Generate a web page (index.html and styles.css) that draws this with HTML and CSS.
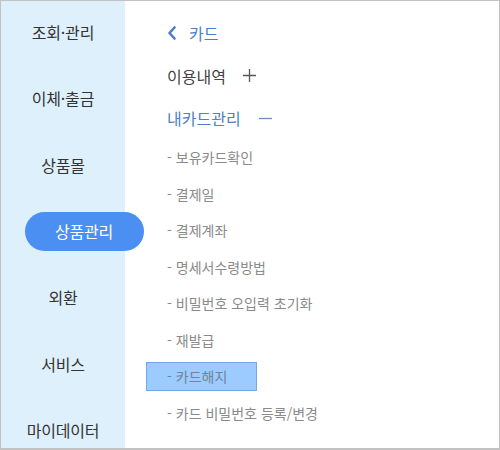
FILE: index.html
```html
<!DOCTYPE html>
<html lang="ko">
<head>
<meta charset="utf-8">
<link rel="stylesheet" href="styles.css">
</head>
<body>
<div class="frame">
  <nav class="side">
    <div class="side-item">조회·관리</div>
    <div class="side-item">이체·출금</div>
    <div class="side-item">상품몰</div>
    <div class="side-item"><span class="pill">상품관리</span></div>
    <div class="side-item">외환</div>
    <div class="side-item">서비스</div>
    <div class="side-item">마이데이터</div>
  </nav>
  <main class="main">
    <div class="title">
      <svg class="chev" width="10" height="14" viewBox="0 0 10 14"><polyline points="7.5,1.5 2.5,7 7.5,12.5" fill="none" stroke="#4a7fc6" stroke-width="2.6" stroke-linecap="round" stroke-linejoin="round"/></svg>
      <span>카드</span>
    </div>
    <div class="group">
      <span>이용내역</span>
      <svg class="plus" width="15" height="15" viewBox="0 0 15 15"><path d="M7.5 1v13M1 7.5h13" stroke="#555" stroke-width="1.3" fill="none"/></svg>
    </div>
    <div class="group open">
      <span>내카드관리</span>
      <svg class="minus" width="15" height="15" viewBox="0 0 15 15"><path d="M1 7.5h13" stroke="#6f8fbf" stroke-width="1.3" fill="none"/></svg>
    </div>
    <ul class="subs">
      <li><span class="sub">- 보유카드확인</span></li>
      <li><span class="sub">- 결제일</span></li>
      <li><span class="sub">- 결제계좌</span></li>
      <li><span class="sub">- 명세서수령방법</span></li>
      <li><span class="sub">- 비밀번호 오입력 초기화</span></li>
      <li><span class="sub">- 재발급</span></li>
      <li><span class="sub active">- 카드해지</span></li>
      <li><span class="sub">- 카드 비밀번호 등록/변경</span></li>
    </ul>
  </main>
</div>
</body>
</html>
```
FILE: styles.css
```css
* { box-sizing: border-box; }
html, body { margin: 0; padding: 0; background: #fff; }
body { font-family: "Noto Sans CJK KR", "Noto Sans", sans-serif; }
.frame {
  width: 500px;
  height: 450px;
  border: 1px solid #c2c2c2;
  border-bottom-width: 2px;
  display: flex;
  overflow: hidden;
}
.side {
  width: 124px;
  flex: none;
  background: #dff0fd;
  display: flex;
  flex-direction: column;
  margin-top: -2px;
  position: relative;
  z-index: 1;
}
.side-item {
  height: 66.3px;
  flex: none;
  display: flex;
  align-items: center;
  justify-content: center;
  font-size: 16px;
  color: #333;
  letter-spacing: -0.2px;
}
.pill {
  width: 119px;
  height: 39px;
  margin-left: 42px;
  flex: none;
  border-radius: 20px;
  background: #4a8ff1;
  color: #fff;
  display: flex;
  align-items: center;
  justify-content: center;
  font-size: 16px;
}
.main {
  flex: 1;
  padding: 10px 0 0 42px;
}
.title {
  height: 43px;
  display: flex;
  align-items: center;
  color: #4a7fc6;
  font-size: 16px;
  gap: 12px;
}
.group {
  height: 43px;
  display: flex;
  align-items: center;
  font-size: 16px;
  color: #444;
  gap: 16px;
}
.group.open { height: 42px; color: #5280bd; gap: 17px; }
.subs {
  list-style: none;
  margin: 0 0 0 -21px;
  padding: 0;
}
.subs li {
  height: 36.5px;
  display: flex;
  align-items: center;
}
.sub {
  font-size: 14px;
  color: #8a8a8a;
  padding-left: 21px;
  height: 29px;
  display: flex;
  align-items: center;
}
.sub.active {
  width: 111px;
  background: #9ccbff;
  border: 1px solid #74a8e4;
  padding-left: 20px;
  color: #72839a;
}
```
